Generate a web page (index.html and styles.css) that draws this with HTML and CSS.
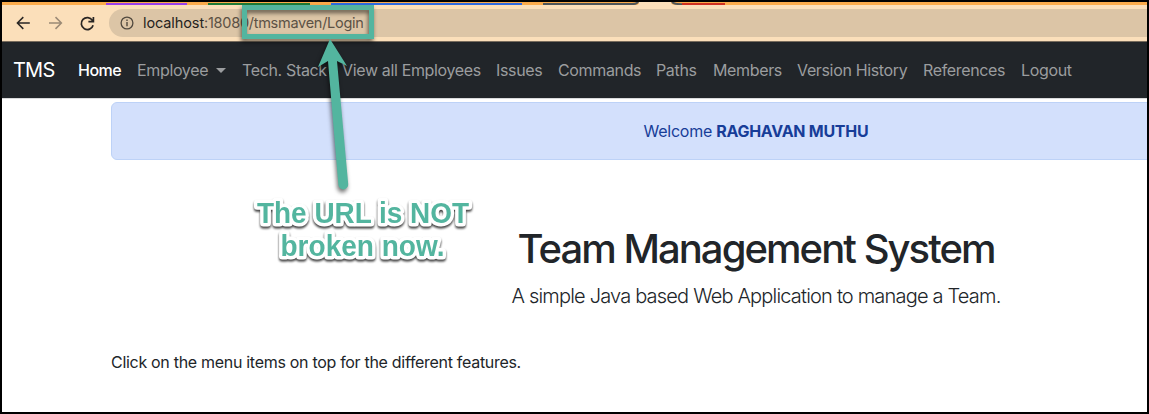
FILE: index.html
```html
<!DOCTYPE html>
<html lang="en">
<head>
<meta charset="utf-8">
<title>Team Management System</title>
<link rel="stylesheet" href="styles.css">
</head>
<body>
<div class="window">
  <div class="tabs">
    <svg width="1145" height="3" viewBox="2 2 1145 3">
      <path d="M636 5q3 0 3-3h32q0 3 5 3z" fill="#fbdfba"/>
      <g fill="none" stroke-width="2">
        <path d="M106 4.1H187" stroke="#9b3fea"/>
        <path d="M208 4.1H310" stroke="#1f7a35"/>
        <path d="M331 4.1H522" stroke="#2f6ae0"/>
        <path d="M543 4.1H632q5 0 6-2.5M672 2q2 2.2 10 2.2" stroke="#4f5558"/>
        <path d="M682 4.1H725" stroke="#cf2f20"/>
      </g>
    </svg>
  </div>
  <div class="toolbar">
    <svg class="controls" width="107" height="36" viewBox="2 5 107 36" fill="none" stroke="#292624" stroke-width="1.5">
      <path d="M29.8 23H17.8M23.3 17.1L17.4 23l5.9 5.9"/>
      <path d="M49 23H61M55.5 17.1L61.4 23l-5.9 5.9" stroke="#9b8a76"/>
      <path d="M92.4 20.4A6 6 0 1 0 93.1 25.2M93.4 16.9V21.6H88.4" stroke-width="1.7"/>
    </svg>
    <div class="address">
      <svg class="info" width="14" height="14" viewBox="0 0 14 14" fill="none" stroke="#51493f">
        <circle cx="7" cy="7" r="5.9" stroke-width="1.3"/><path d="M7 6.1v4.1M7 3.5v1.5" stroke-width="1.4"/>
      </svg>
      <span class="url"><b>localhost</b>:18080/tmsmaven/Login</span>
    </div>
  </div>
  <nav class="navbar">
    <a class="brand">TMS</a>
    <a class="active">Home</a>
    <a class="dropdown">Employee</a>
    <a>Tech. Stack</a>
    <a>View all Employees</a>
    <a>Issues</a>
    <a>Commands</a>
    <a>Paths</a>
    <a>Members</a>
    <a>Version History</a>
    <a>References</a>
    <a>Logout</a>
  </nav>
  <main class="container">
    <div class="alert">Welcome <strong>RAGHAVAN MUTHU</strong></div>
    <h1>Team Management System</h1>
    <p class="lead">A simple Java based Web Application to manage a Team.</p>
    <p class="hint">Click on the menu items on top for the different features.</p>
  </main>
  <svg class="annotation" width="1149" height="414" viewBox="0 0 1149 414">
    <g class="marker">
      <rect x="244.5" y="7.5" width="127" height="29" fill="none" stroke="#53b59f" stroke-width="5"/>
      <path d="M330 39L347 66L337 61L348.2 184A4.8 4.8 0 0 1 338.4 185L328 61L318 67Z" fill="#53b59f"/>
    </g>
    <g class="note" text-anchor="middle">
      <text x="363" y="223" textLength="212" lengthAdjust="spacingAndGlyphs">The URL is NOT</text>
      <text x="362.5" y="256" textLength="164" lengthAdjust="spacingAndGlyphs">broken now.</text>
    </g>
  </svg>
</div>
</body>
</html>
```
FILE: styles.css
```css
* { box-sizing: border-box; }
body {
  margin: 0;
  font: 16px/24px Inter, "Liberation Sans", sans-serif;
  color: #212529;
}
.window {
  position: relative;
  width: 1149px;
  height: 414px;
  border: 2px solid #000;
  background: #fff;
  overflow: hidden;
}
.tabs { height: 3px; background: #fbab4b; }
.tabs svg { display: block; }
.toolbar {
  display: flex;
  height: 37px;
  background: #fbdfba;
  border-bottom: 1px solid #776b5c;
}
.address {
  flex: 1;
  display: flex;
  align-items: center;
  gap: 9px;
  height: 28px;
  margin-top: 4px;
  padding-left: 11px;
  border-radius: 14px 0 0 14px;
  background: #dcc5a6;
}
.url { font-size: 14.5px; color: #5c5245; white-space: nowrap; letter-spacing: -0.27px; }
.url b { font-weight: 400; color: #262320; letter-spacing: -0.1px; }
.navbar {
  display: grid;
  grid-template-columns: 65px 59px 105px 100px 154px 62px 98px 57px 84px 126px 98px 70px;
  align-items: center;
  height: 56px;
  padding-left: 11px;
  background: #212529;
  color: #9b9d9f;
  letter-spacing: -0.35px;
  white-space: nowrap;
  box-shadow: 0 1px #d9dadb;
}
.navbar .brand { font-size: 20px; color: #fff; letter-spacing: -0.8px; }
.navbar .active { color: #fff; font-weight: 500; letter-spacing: -0.5px; }
.dropdown::after {
  content: "";
  display: inline-block;
  margin-left: 8px;
  vertical-align: 3px;
  border: 5px solid transparent;
  border-top-color: currentColor;
  border-bottom: 0;
}
.container { width: 1290px; margin-left: 109px; padding-top: 4px; text-align: center; }
.alert {
  height: 58px;
  padding: 16px;
  border: 1px solid #bdd2f7;
  border-radius: 6px;
  background: #d3e0fc;
  color: #173d98;
  letter-spacing: -0.27px;
}
.alert strong { font-weight: 700; }
h1 { margin: 65px 0 8px; font-size: 40px; line-height: 48px; font-weight: 500; letter-spacing: -1.95px; }
.lead { margin: 0; font-size: 20px; line-height: 30px; font-weight: 300; letter-spacing: -0.81px; }
.hint { margin: 39px 0 0; text-align: left; letter-spacing: -0.3px; }
.annotation { position: absolute; left: -2px; top: -2px; }
.marker { filter: drop-shadow(-1px 3px 2px rgba(0, 0, 0, .55)); }
.note {
  font: bold 29px "Liberation Sans", Arial, sans-serif;
  fill: #53b59f;
  stroke: #fff;
  stroke-width: 7px;
  stroke-linejoin: round;
  paint-order: stroke;
  filter: drop-shadow(0 2px 1px rgba(0, 0, 0, .75));
}
```
